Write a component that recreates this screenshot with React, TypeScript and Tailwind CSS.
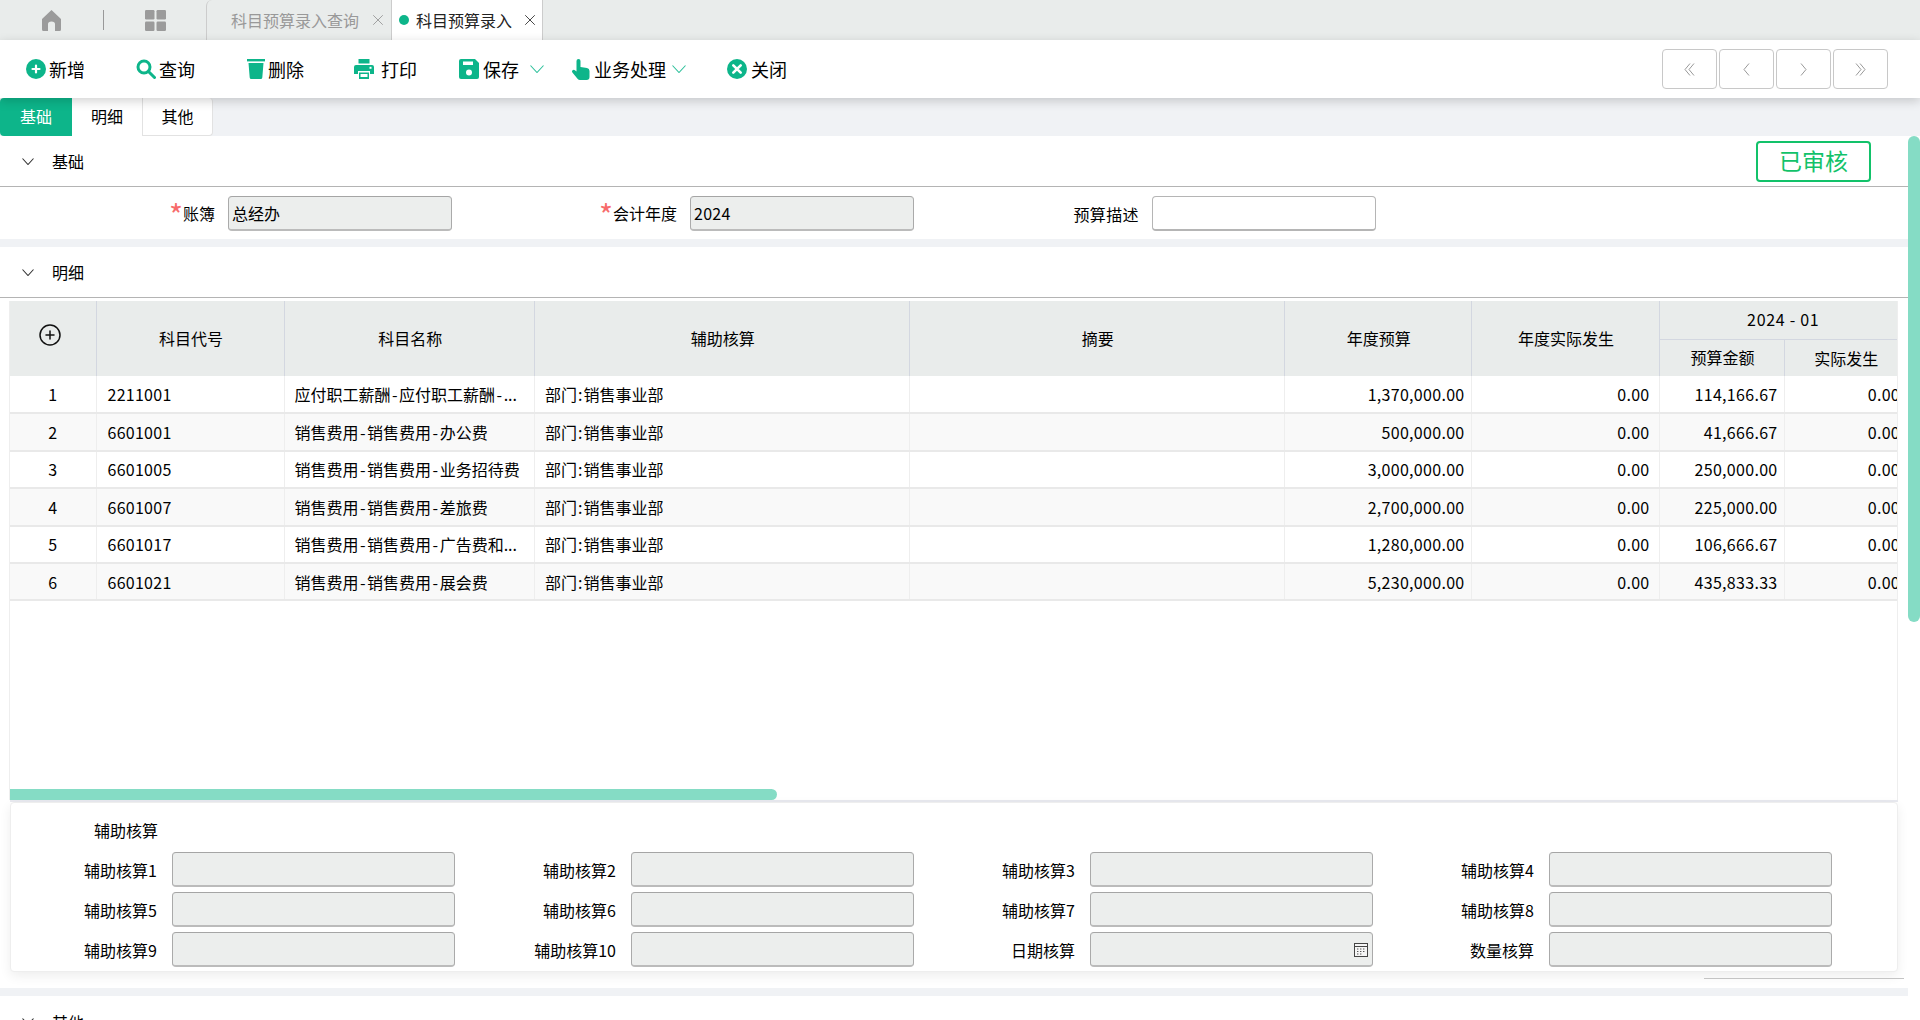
import React from "react";
import { X, CirclePlus } from "lucide-react";

const TEAL = "#0db58a";

function HomeIcon() {
  return (
    <svg width="19" height="21" viewBox="0 0 19 21" className="ml-[42px] shrink-0">
      <path d="M9.5 0 L19 9 L19 19.5 Q19 21 17.5 21 L13 21 L13 14 Q13 11.5 9.5 11.5 Q6 11.5 6 14 L6 21 L1.5 21 Q0 21 0 19.5 L0 9 Z" fill="#9b9b9b" />
    </svg>
  );
}
function GridIcon() {
  return (
    <svg width="21" height="21" viewBox="0 0 21 21" className="shrink-0">
      <rect x="0" y="0" width="9.5" height="9.5" rx="1.2" fill="#9b9b9b" />
      <rect x="11.5" y="0" width="9.5" height="9.5" rx="1.2" fill="#9b9b9b" />
      <rect x="0" y="11.5" width="9.5" height="9.5" rx="1.2" fill="#9b9b9b" />
      <rect x="11.5" y="11.5" width="9.5" height="9.5" rx="1.2" fill="#9b9b9b" />
    </svg>
  );
}
const AddIcon = () => (
  <svg width="20" height="20" viewBox="0 0 20 20" className="shrink-0"><circle cx="10" cy="10" r="10" fill={TEAL} /><path d="M10 6.5v7M6.5 10h7" stroke="#fff" strokeWidth="2.2" strokeLinecap="round" /></svg>
);
const SearchIcon = () => (
  <svg width="20" height="20" viewBox="0 0 20 20" className="shrink-0"><circle cx="8" cy="8" r="6" fill="none" stroke={TEAL} strokeWidth="3" /><path d="M12.5 12.5L18.5 18.5" stroke={TEAL} strokeWidth="3" strokeLinecap="round" /></svg>
);
const TrashIcon = () => (
  <svg width="18" height="20" viewBox="0 0 18 20" className="shrink-0"><rect x="0" y="0" width="18" height="2.4" fill={TEAL} /><path d="M1.5 4h15l-1.2 14.5q-.1 1.5-1.6 1.5H4.3q-1.5 0-1.6-1.5z" fill={TEAL} /></svg>
);
const PrintIcon = () => (
  <svg width="20" height="20" viewBox="0 0 20 20" className="shrink-0"><path d="M4.5 0h11v4.5h-11z" fill={TEAL} /><path d="M2 6h16q2 0 2 2v7h-4v-3H4v3H0V8q0-2 2-2z" fill={TEAL} /><path d="M5 13.5h10V20H5z" fill={TEAL} /><rect x="15.5" y="7.8" width="2" height="2" fill="#fff" /><rect x="6.5" y="15" width="7" height="3" fill="#fff" /></svg>
);
const SaveIcon = () => (
  <svg width="20" height="20" viewBox="0 0 20 20" className="shrink-0"><path d="M2 0h14l4 4v14q0 2-2 2H2q-2 0-2-2V2q0-2 2-2z" fill={TEAL} /><rect x="4" y="2.5" width="10" height="3.5" fill="#fff" /><circle cx="10" cy="13.5" r="3" fill="#fff" /></svg>
);
const HandIcon = () => (
  <svg width="18" height="21" viewBox="0 0 18 21" className="shrink-0"><path d="M4.5 2q0-2 2-2t2 2v6l6.5 1q2.5.5 2.5 3v6q0 3-3 3H8q-1.500 0-2.500-1.200L.4 13.500q-.9-1.300.2-2.300 1.100-.9 2.300 0l1.600 1.300z" fill={TEAL} /></svg>
);
const CloseIcon = () => (
  <svg width="20" height="20" viewBox="0 0 20 20" className="shrink-0"><circle cx="10" cy="10" r="10" fill={TEAL} /><path d="M6.300 6.300l7.400 7.400M13.700 6.300l-7.400 7.400" stroke="#fff" strokeWidth="2.600" strokeLinecap="round" /></svg>
);

function Chevron({ className, color, w, h }: { className?: string; color: string; w: number; h: number }) {
  return (
    <svg width={w} height={h} viewBox={`0 0 ${w} ${h}`} className={`shrink-0 ${className ?? ""}`}>
      <path d={`M0.5 0.5L${w / 2} ${h - 0.5}L${w - 0.5} 0.5`} fill="none" stroke={color} strokeWidth="1.1" />
    </svg>
  );
}

function PageArrow({ dir, double }: { dir: "l" | "r"; double?: boolean }) {
  const one = dir === "l" ? "M6 0.5L1 6.5L6 12.5" : "M1 0.5L6 6.5L1 12.5";
  const two = dir === "l" ? "M10 0.5L5 6.5L10 12.5" : "M5 0.5L10 6.5L5 12.5";
  return (
    <svg width={double ? 11 : 7} height="13" viewBox={`0 0 ${double ? 11 : 7} 13`}>
      <path d={one} fill="none" stroke="#999" strokeWidth="1" />
      {double ? <path d={two} fill="none" stroke="#999" strokeWidth="1" /> : null}
    </svg>
  );
}

function ToolButton({ icon, label, className, gap, arrow }: { icon: React.ReactNode; label: string; className: string; gap: string; arrow?: string }) {
  return (
    <div className={`flex items-center shrink-0 ${className}`}>
      {icon}
      <span className={`${gap} text-[18px] leading-[24px] text-black whitespace-nowrap`}>{label}</span>
      {arrow ? <Chevron w={14} h={8} color="#2fc19c" className={arrow} /> : null}
    </div>
  );
}

function PageButton({ children }: { children: React.ReactNode }) {
  return (
    <div className="w-[55px] h-[40px] border border-[#c8c8c8] rounded-[4px] flex items-center justify-center bg-white">{children}</div>
  );
}

function GrayInput({ value, className }: { value?: string; className: string }) {
  return (
    <div className={`h-[35px] rounded-[4px] border border-[#aaaaaa] border-b-[#bbbbbb] border-t-[#a5a5a5] border-b-2 bg-[#eceeed] pl-[3px] text-[16px] leading-[33px] text-black ${className}`}>{value}</div>
  );
}

function SectionHead({ title, children }: { title: string; children?: React.ReactNode }) {
  return (
    <div className="h-[51px] flex items-center border-b border-[#b4b4b4]">
      <Chevron w={12} h={7} color="#333" className="ml-[22px]" />
      <span className="ml-[18px] text-[16px] leading-[22px] text-black">{title}</span>
      {children}
    </div>
  );
}

function Hy({ text }: { text: string }) {
  const parts = text.split("-");
  return (
    <>
      {parts.map((p, i) => (
        <React.Fragment key={i}>
          {i > 0 ? <span className="mx-[1.5px]">-</span> : null}
          {p}
        </React.Fragment>
      ))}
    </>
  );
}

function Star() {
  return <span className="inline-block align-top h-[20px] text-[#f76b6b] text-[30px] leading-[27px]">*</span>;
}

const rows = [
  ["1", "2211001", "应付职工薪酬-应付职工薪酬-...", "1,370,000.00", "114,166.67"],
  ["2", "6601001", "销售费用-销售费用-办公费", "500,000.00", "41,666.67"],
  ["3", "6601005", "销售费用-销售费用-业务招待费", "3,000,000.00", "250,000.00"],
  ["4", "6601007", "销售费用-销售费用-差旅费", "2,700,000.00", "225,000.00"],
  ["5", "6601017", "销售费用-销售费用-广告费和...", "1,280,000.00", "106,666.67"],
  ["6", "6601021", "销售费用-销售费用-展会费", "5,230,000.00", "435,833.33"],
];

const auxFields = [
  "辅助核算1", "辅助核算2", "辅助核算3", "辅助核算4",
  "辅助核算5", "辅助核算6", "辅助核算7", "辅助核算8",
  "辅助核算9", "辅助核算10", "日期核算", "数量核算",
];

const th = "border-r border-[#d3d7e0] font-normal text-[16px] text-black text-center p-0 pb-[2px] pl-[2px]";
const td = "border-r border-b-2 border-r-[#eeeeee] border-b-[#e9e9e9] text-[16px] text-black p-0 whitespace-nowrap overflow-hidden";

export default function App() {
  return (
    <div className="w-[1920px] h-[1020px] overflow-hidden flex flex-col bg-[#f0f2f5] font-['Noto_Sans_CJK_SC','Noto_Sans',sans-serif]">
      {/* top tab bar */}
      <div className="h-[40px] shrink-0 bg-[#e9eceb] flex items-center">
        <HomeIcon />
        <div className="ml-[42px] mr-[41px] w-px h-[20px] bg-[#999]" />
        <GridIcon />
        <div className="ml-[40px] w-[185px] h-full border-l border-[#cccccc] rounded-tl-[6px] flex items-center pl-[24px]">
          <span className="text-[16px] leading-[22px] text-[#999999] whitespace-nowrap">科目预算录入查询</span>
          <X size={18} strokeWidth={1} color="#888" className="ml-[10px] shrink-0" />
        </div>
        <div className="w-[152px] h-full bg-white border-l border-r border-[#cccccc] flex items-center pl-[7px]">
          <span className="w-[10px] h-[10px] rounded-full bg-[#0db58a] shrink-0" />
          <span className="ml-[7px] text-[16px] leading-[22px] text-[#222] whitespace-nowrap">科目预算录入</span>
          <X size={18} strokeWidth={1.2} color="#333" className="ml-[9px] shrink-0" />
        </div>
      </div>

      {/* toolbar */}
      <div className="relative z-10 h-[58px] shrink-0 bg-white flex items-center shadow-[0_3px_10px_rgba(0,0,0,0.18)]">
        <ToolButton icon={<AddIcon />} label="新增" gap="ml-[3px]" className="ml-[26px]" />
        <ToolButton icon={<SearchIcon />} label="查询" gap="ml-[3px]" className="ml-[51px]" />
        <ToolButton icon={<TrashIcon />} label="删除" gap="ml-[3px]" className="ml-[52px]" />
        <ToolButton icon={<PrintIcon />} label="打印" gap="ml-[7px]" className="ml-[50px]" />
        <ToolButton icon={<SaveIcon />} label="保存" gap="ml-[4px]" className="ml-[42px]" arrow="ml-[11px]" />
        <ToolButton icon={<HandIcon />} label="业务处理" gap="ml-[4px]" className="ml-[28px]" arrow="ml-[6px]" />
        <ToolButton icon={<CloseIcon />} label="关闭" gap="ml-[4px]" className="ml-[41px]" />
        <div className="ml-auto mr-[32px] flex gap-[2px]">
          <PageButton><PageArrow dir="l" double /></PageButton>
          <PageButton><PageArrow dir="l" /></PageButton>
          <PageButton><PageArrow dir="r" /></PageButton>
          <PageButton><PageArrow dir="r" double /></PageButton>
        </div>
      </div>

      {/* sheet tabs */}
      <div className="h-[38px] shrink-0 flex">
        <div className="w-[72px] pb-[2px] bg-[#0db58a] rounded-l-[4px] text-white text-[16px] flex items-center justify-center">基础</div>
        <div className="w-[71px] pb-[2px] bg-white border-r border-[#e2e2e2] text-black text-[16px] flex items-center justify-center">明细</div>
        <div className="w-[70px] pb-[2px] bg-white rounded-r-[4px] border-r border-b border-[#e2e2e2] text-black text-[16px] flex items-center justify-center">其他</div>
      </div>

      {/* body */}
      <div className="flex-1 flex min-h-0">
        <div className="w-[1908px] shrink-0 flex flex-col gap-[8px]">
          {/* section 1 */}
          <div className="h-[103px] shrink-0 bg-white">
            <SectionHead title="基础">
              <div className="ml-auto mr-[37px] w-[115px] h-[41px] pb-[2px] rounded-[4px] border-2 border-[#12c26a] text-[#12c26a] text-[23px] flex items-center justify-center">已审核</div>
            </SectionHead>
            <div className="flex mt-[9px]">
              <div className="w-[462px] flex items-center">
                <div className="w-[215px] pb-[2px] text-right text-[16px] leading-[24px] text-black"><Star />账簿</div>
                <GrayInput value="总经办" className="ml-[13px] w-[224px]" />
              </div>
              <div className="w-[462px] flex items-center">
                <div className="w-[215px] pb-[2px] text-right text-[16px] leading-[24px] text-black"><Star />会计年度</div>
                <GrayInput value="2024" className="ml-[13px] w-[224px] tracking-[0.3px]" />
              </div>
              <div className="w-[462px] flex items-center">
                <div className="w-[215px] text-right text-[16px] leading-[24px] text-black tracking-[0.4px]">预算描述</div>
                <div className="ml-[13px] w-[224px] h-[35px] rounded-[4px] border border-[#b5b5b5] border-b-2 bg-white" />
              </div>
            </div>
          </div>

          {/* section 2 */}
          <div className="h-[741px] shrink-0 bg-white flex flex-col">
            <SectionHead title="明细" />
            <div className="ml-[9px] mr-[10.5px] mt-[3px] h-[499px] shrink-0 border-r border-l border-[#eeeeee] overflow-hidden relative">
              <table className="table-fixed border-collapse w-[1898px]">
                <colgroup>
                  <col className="w-[86px]" />
                  <col className="w-[188px]" />
                  <col className="w-[250.5px]" />
                  <col className="w-[374.5px]" />
                  <col className="w-[375.5px]" />
                  <col className="w-[186.5px]" />
                  <col className="w-[188px]" />
                  <col className="w-[125px]" />
                  <col className="w-[124px]" />
                </colgroup>
                <thead className="bg-[#e9eceb]">
                  <tr className="h-[38px]">
                    <th rowSpan={2} className={th}>
                      <div className="flex justify-center -mt-[5px] pr-[7px]"><CirclePlus size={24} strokeWidth={1.5} color="#111" /></div>
                    </th>
                    <th rowSpan={2} className={th}>科目代号</th>
                    <th rowSpan={2} className={th}>科目名称</th>
                    <th rowSpan={2} className={th}>辅助核算</th>
                    <th rowSpan={2} className={th}>摘要</th>
                    <th rowSpan={2} className={th}>年度预算</th>
                    <th rowSpan={2} className={th}>年度实际发生</th>
                    <th colSpan={2} className="border-b border-[#d3d7e0] font-normal text-[16px] text-black text-center p-0 pr-[1px] pb-[2px] tracking-[0.7px]">2024 - 01</th>
                  </tr>
                  <tr className="h-[37px]">
                    <th className={th}>预算金额</th>
                    <th className="font-normal text-[16px] text-black text-center p-0">实际发生</th>
                  </tr>
                </thead>
                <tbody>
                  {rows.map((r, i) => (
                    <tr key={r[0]} className={i % 2 === 0 ? "h-[37.4px] bg-white" : "h-[37.4px] bg-[#f9f9f9]"}>
                      <td className={`${td} text-center`}>{r[0]}</td>
                      <td className={`${td} pl-[11px] tracking-[0.27px]`}>{r[1]}</td>
                      <td className={`${td} pl-[10px]`}><Hy text={r[2]} /></td>
                      <td className={`${td} pl-[10px]`}>部门<span className="mx-[1px]">:</span>销售事业部</td>
                      <td className={td}></td>
                      <td className={`${td} text-right pr-[6px] tracking-[0.3px]`}>{r[3]}</td>
                      <td className={`${td} text-right pr-[9px] tracking-[0.3px]`}>0.00</td>
                      <td className={`${td} text-right pr-[6px] tracking-[0.3px]`}>{r[4]}</td>
                      <td className={`${td} text-right pr-[7.5px] tracking-[0.3px]`}>0.00</td>
                    </tr>
                  ))}
                </tbody>
              </table>
              <div className="absolute left-0 bottom-0 w-[767px] h-[11px] rounded-r-full rounded-l-[4px] bg-[#85dcc5]" />
            </div>
            <div className="ml-[10px] mr-[10.5px] h-[2px] shrink-0 bg-[#e8e9ef]" />
            <div className="ml-[10px] mr-[10.5px] h-[170px] shrink-0 rounded-[4px] bg-white border border-[#eeeeee] shadow-[0_4px_12px_rgba(0,0,0,0.07)]">
              <div className="w-[147px] mt-[15px] text-right text-[16px] leading-[24px] text-black">辅助核算</div>
              <div className="grid grid-cols-[459px_459px_459px_459px] auto-rows-[40px] mt-[10px]">
                {auxFields.map((f) => (
                  <div key={f} className="flex items-start">
                    <div className="w-[146px] text-right text-[16px] leading-[37px] text-black whitespace-nowrap">{f}</div>
                    <div className="ml-[14.5px] w-[283px] relative">
                      <GrayInput className="w-full" />
                      {f === "日期核算" ? (
                        <svg width="14" height="15" viewBox="0 0 14 15" className="absolute right-[5px] top-[10px]">
                          <rect x="0.500" y="1.500" width="13" height="13" fill="#f5f5f5" stroke="#444" />
                          <path d="M0.500 4.500h13" stroke="#444" />
                          <path d="M3 7h2M6 7h2M9 7h2M3 9.500h2M6 9.500h2M9 9.500h2M3 12h2M6 12h2" stroke="#555" strokeDasharray="1 0.600" />
                        </svg>
                      ) : null}
                    </div>
                  </div>
                ))}
              </div>
            </div>
            <div className="ml-auto mr-[4px] mt-[6px] w-[200px] h-px shrink-0 bg-[#c4c4c4]" />
          </div>

          {/* section 3 */}
          <div className="flex-1 min-h-0 overflow-hidden bg-white">
            <div className="h-[51px] flex items-center">
              <Chevron w={12} h={7} color="#333" className="ml-[22px]" />
              <span className="ml-[18px] text-[16px] leading-[22px] text-black">其他</span>
            </div>
          </div>
        </div>

        {/* page scrollbar */}
        <div className="flex-1 bg-white">
          <div className="h-[486px] rounded-t-full rounded-b-full bg-[#85dcc5]" />
        </div>
      </div>
    </div>
  );
}
